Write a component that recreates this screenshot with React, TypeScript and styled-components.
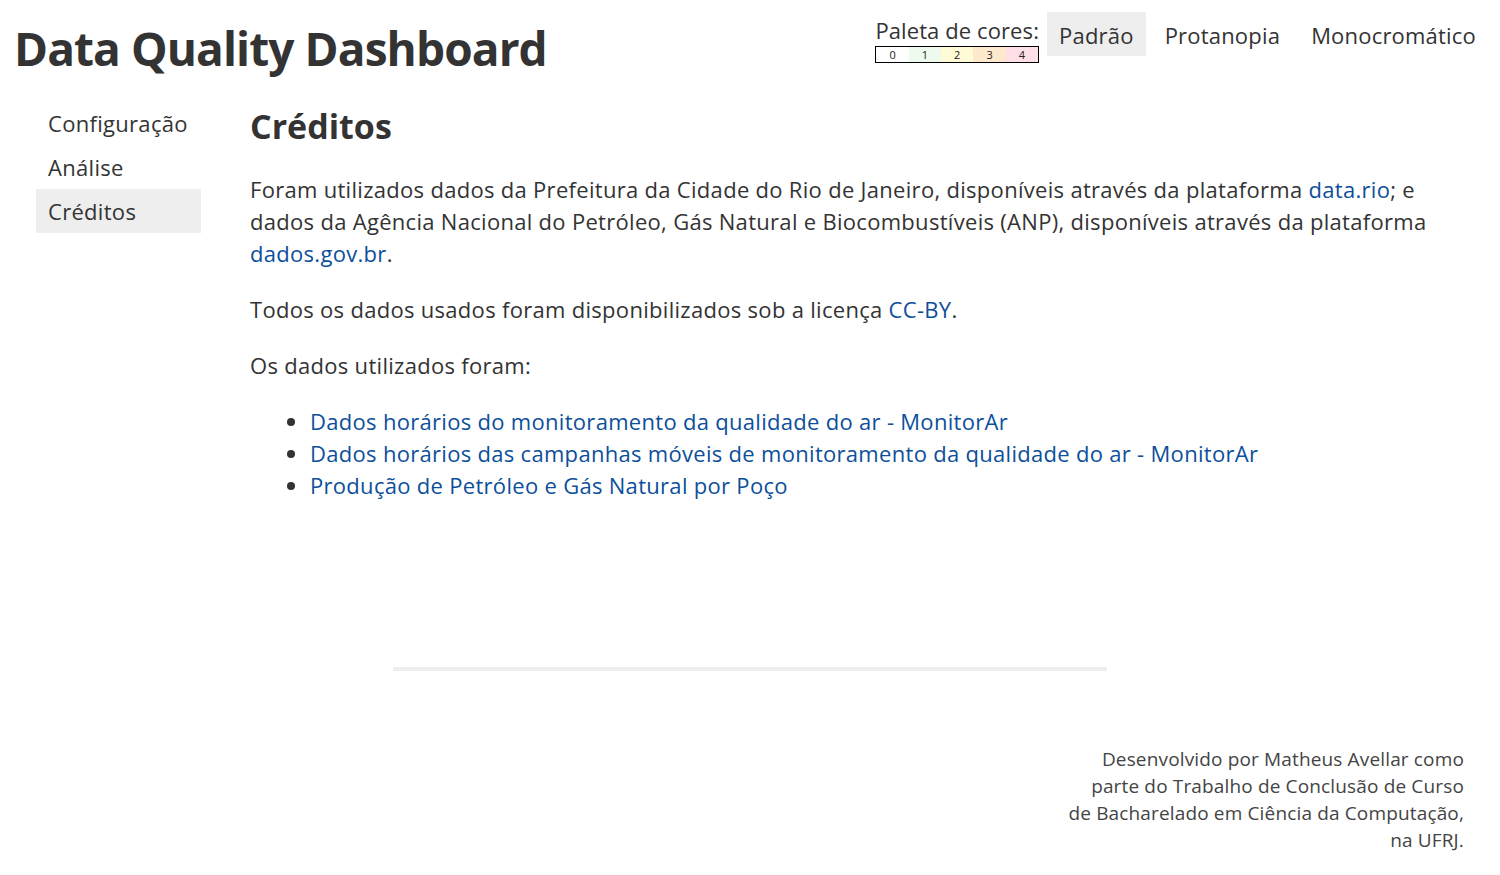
import styled, { createGlobalStyle } from 'styled-components'

const GlobalStyle = createGlobalStyle`
  body {
    margin: 0;
    background: #fff;
    color: #333;
    font-family: 'Open Sans', 'Noto Sans', sans-serif;
  }
`

const palette = [
  { label: '0', color: '#ffffff' },
  { label: '1', color: '#effaee' },
  { label: '2', color: '#fffbd6' },
  { label: '3', color: '#ffe9cc' },
  { label: '4', color: '#ffe0e6' },
]

const navItems = ['Configuração', 'Análise', 'Créditos']
const paletteOptions = ['Padrão', 'Protanopia', 'Monocromático']

const sources = [
  'Dados horários do monitoramento da qualidade do ar - MonitorAr',
  'Dados horários das campanhas móveis de monitoramento da qualidade do ar - MonitorAr',
  'Produção de Petróleo e Gás Natural por Poço',
]

export default function App() {
  return (
    <>
      <GlobalStyle />
      <S.Header>
        <S.Title>Data Quality Dashboard</S.Title>
        <S.PaletteBar>
          <S.PaletteLabel>
            <span>Paleta de cores:</span>
            <S.Legend>
              {palette.map(p => (
                <S.LegendCell key={p.label} $color={p.color}>
                  {p.label}
                </S.LegendCell>
              ))}
            </S.Legend>
          </S.PaletteLabel>
          {paletteOptions.map((name, i) => (
            <S.PaletteButton key={name} $active={i === 0}>
              {name}
            </S.PaletteButton>
          ))}
        </S.PaletteBar>
      </S.Header>

      <S.Layout>
        <S.Nav>
          {navItems.map(item => (
            <S.NavItem key={item} $active={item === 'Créditos'}>
              {item}
            </S.NavItem>
          ))}
        </S.Nav>

        <S.Main>
          <S.Heading>Créditos</S.Heading>
          <S.Paragraph>
            Foram utilizados dados da Prefeitura da Cidade do Rio de Janeiro, disponíveis através da
            plataforma <S.Link href="#">data.rio</S.Link>; e dados da Agência Nacional do Petróleo, Gás
            Natural e Biocombustíveis (ANP), disponíveis através da plataforma{' '}
            <S.Link href="#">dados.gov.br</S.Link>.
          </S.Paragraph>
          <S.Paragraph>
            Todos os dados usados foram disponibilizados sob a licença <S.Link href="#">CC-BY</S.Link>.
          </S.Paragraph>
          <S.Paragraph>Os dados utilizados foram:</S.Paragraph>
          <S.List>
            {sources.map(s => (
              <li key={s}>
                <S.Link href="#">{s}</S.Link>
              </li>
            ))}
          </S.List>
        </S.Main>
      </S.Layout>

      <S.Footer>
        <S.Rule />
        <S.Credits>
          Desenvolvido por Matheus Avellar como
          <br />
          parte do Trabalho de Conclusão de Curso
          <br />
          de Bacharelado em Ciência da Computação,
          <br />
          na UFRJ.
        </S.Credits>
      </S.Footer>
    </>
  )
}

const S = {
  Header: styled.header`
    display: flex;
    justify-content: space-between;
    align-items: flex-start;
    padding: 12px 12px 0 14px;
  `,

  Title: styled.h1`
    margin: 6px 0 0;
    font-size: 46px;
    font-weight: 700;
    line-height: 60px;
    letter-spacing: -0.9px;
    color: #333;
  `,

  PaletteBar: styled.div`
    display: flex;
    align-items: flex-start;
    column-gap: 7px;
  `,

  PaletteLabel: styled.div`
    display: flex;
    flex-direction: column;
    font-size: 22px;
    line-height: 26px;
    padding-top: 5px;
    margin-right: 1px;
    letter-spacing: 0.1px;
  `,

  Legend: styled.div`
    display: flex;
    margin-top: 3px;
    border: 1px solid #000;
    height: 15px;
    letter-spacing: 0;
  `,

  LegendCell: styled.div<{ $color: string }>`
    flex: 1;
    background: ${p => p.$color};
    font-size: 11px;
    line-height: 15px;
    text-align: center;
    color: #222;
  `,

  PaletteButton: styled.div<{ $active?: boolean }>`
    padding: 0 12px;
    height: 44px;
    line-height: 46px;
    font-size: 22px;
    letter-spacing: 0.2px;
    background: ${p => (p.$active ? '#eee' : 'transparent')};
    color: #333;
    cursor: pointer;
  `,

  Layout: styled.div`
    display: grid;
    grid-template-columns: 165px 1fr;
    column-gap: 49px;
    padding: 23px 36px 0;
    letter-spacing: 0.3px;
  `,

  Nav: styled.nav`
    display: flex;
    flex-direction: column;
  `,

  NavItem: styled.a<{ $active?: boolean }>`
    display: block;
    padding: 0 12px;
    height: 44px;
    line-height: 44px;
    font-size: 22px;
    color: #333;
    background: ${p => (p.$active ? '#eee' : 'transparent')};
    cursor: pointer;
  `,

  Main: styled.main`
    min-height: 563px;
    margin-top: 3px;
  `,

  Heading: styled.h2`
    margin: 0 0 25px;
    font-size: 34px;
    line-height: 44px;
    font-weight: 700;
    letter-spacing: 0;
  `,

  Paragraph: styled.p`
    margin: 0 0 24px;
    font-size: 22px;
    line-height: 32px;
  `,

  Link: styled.a`
    color: #0d4f9b;
    text-decoration: none;
  `,

  List: styled.ul`
    margin: 0;
    padding-left: 60px;
    font-size: 22px;
    line-height: 32px;
  `,

  Footer: styled.footer`
    display: flex;
    flex-direction: column;
    padding: 0 36px 20px;
  `,

  Rule: styled.hr`
    width: 714px;
    height: 4px;
    margin: 0 auto 75px;
    border: none;
    background: #eee;
  `,

  Credits: styled.p`
    margin: 0;
    align-self: flex-end;
    text-align: right;
    font-size: 19px;
    line-height: 27px;
    letter-spacing: 0.15px;
    color: #444;
  `,
}
